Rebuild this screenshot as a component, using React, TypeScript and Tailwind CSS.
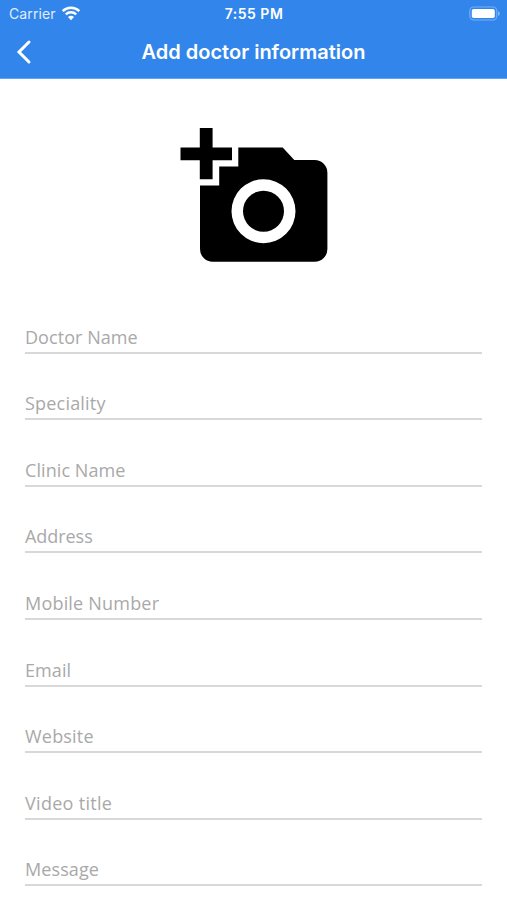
import { useState } from "react";

const fields = [
  { name: "doctorName", label: "Doctor Name", tracking: "tracking-[0.05px]" },
  { name: "speciality", label: "Speciality", tracking: "tracking-[0.2px]" },
  { name: "clinicName", label: "Clinic Name", tracking: "tracking-[0.08px]" },
  { name: "address", label: "Address", tracking: "tracking-[-0.05px]" },
  { name: "mobile", label: "Mobile Number", tracking: "tracking-[0.2px]" },
  { name: "email", label: "Email", tracking: "tracking-[0.1px]" },
  { name: "website", label: "Website", tracking: "tracking-[0.2px]" },
  { name: "videoTitle", label: "Video title", tracking: "tracking-[0.3px]" },
  { name: "message", label: "Message", tracking: "tracking-[0.1px]" },
];

function WifiIcon() {
  return (
    <svg width="20" height="15" viewBox="0 0 20 15" fill="none">
      <path d="M1.7 5.1a12 12 0 0 1 16.6 0" stroke="white" strokeWidth="2.5" />
      <path d="M4.8 8.3a7.6 7.6 0 0 1 10.4 0" stroke="white" strokeWidth="2.4" />
      <path d="M10 14.2 7 11.1a4.3 4.3 0 0 1 6 0Z" fill="white" />
    </svg>
  );
}

function BatteryIcon() {
  return (
    <svg width="32" height="16" viewBox="0 0 32 16" fill="none">
      <rect x="0.8" y="1" width="27" height="13" rx="4" stroke="#77b0f4" strokeWidth="1.1" />
      <rect x="2.8" y="2.9" width="23" height="9.2" rx="1.8" fill="white" />
      <path d="M29.2 5.2c2 .8 2 3.8 0 4.6Z" fill="#8fc0f8" />
    </svg>
  );
}

function AddPhotoIcon() {
  return (
    <svg width="148" height="134" viewBox="180 128 148 134" fill="black">
      <path d="M199.8 128h12.8v19.4H232v12.8h-19.4v19h-12.8v-19h-19.3v-12.8h19.3Z" />
      <path
        fillRule="evenodd"
        d="M238.3 147.4h44.4l11.6 12.6h20.4a12.7 12.7 0 0 1 12.7 12.7v76.4a12.7 12.7 0 0 1-12.7 12.7h-102a12.7 12.7 0 0 1-12.7-12.7v-63.5h19.2v-19h19.1ZM263.5 179.2a32 32 0 1 0 0 64 32 32 0 0 0 0-64Z"
      />
      <circle cx="263.5" cy="211.2" r="20.5" />
    </svg>
  );
}

export default function App() {
  const [form, setForm] = useState<Record<string, string>>({});

  return (
    <div className="h-[900px] w-[507px] overflow-hidden bg-white">
      <header className="h-[79px] border-b border-[#5fa5f3] bg-[#3286eb] font-['Inter',sans-serif] text-white">
        <div className="grid h-[27px] grid-cols-3 items-center pr-[6px] pl-[9px]">
          <div className="flex items-center gap-[5px]">
            <span className="text-[14px] tracking-[0.1px] text-[#e0edfc]">Carrier</span>
            <WifiIcon />
          </div>
          <span className="-ml-[2px] text-center text-[14px] font-semibold tracking-[0.5px]">
            7:55 PM
          </span>
          <div className="flex justify-end">
            <BatteryIcon />
          </div>
        </div>
        <div className="grid h-[50px] grid-cols-[60px_1fr_60px] items-center">
          <button type="button" aria-label="Back" className="pl-4">
            <svg width="16" height="26" viewBox="0 0 16 26" fill="none">
              <path d="M13 3 3 13l10 10" stroke="white" strokeWidth="3" strokeLinecap="round" />
            </svg>
          </button>
          <h1 className="text-center text-[20px] font-semibold">Add doctor information</h1>
        </div>
      </header>

      <main className="px-[25px]">
        <button type="button" aria-label="Add photo" className="mx-auto mt-[49px] block">
          <AddPhotoIcon />
        </button>

        <form className="mt-[25px] font-['Open_Sans',sans-serif]">
          {fields.map((field) => (
            <label
              key={field.name}
              className="relative flex h-[66.6px] items-end border-b-2 border-[#d8d8d8] pb-[1px]"
            >
              {!form[field.name] && (
                <span className={`text-[18px] leading-[28px] text-[#a9a9a9] ${field.tracking}`}>
                  {field.label}
                </span>
              )}
              <input
                name={field.name}
                value={form[field.name] ?? ""}
                onChange={(e) => setForm({ ...form, [field.name]: e.target.value })}
                className="absolute inset-x-0 bottom-0 h-8 bg-transparent text-[18px] outline-none"
              />
            </label>
          ))}
        </form>
      </main>
    </div>
  );
}
